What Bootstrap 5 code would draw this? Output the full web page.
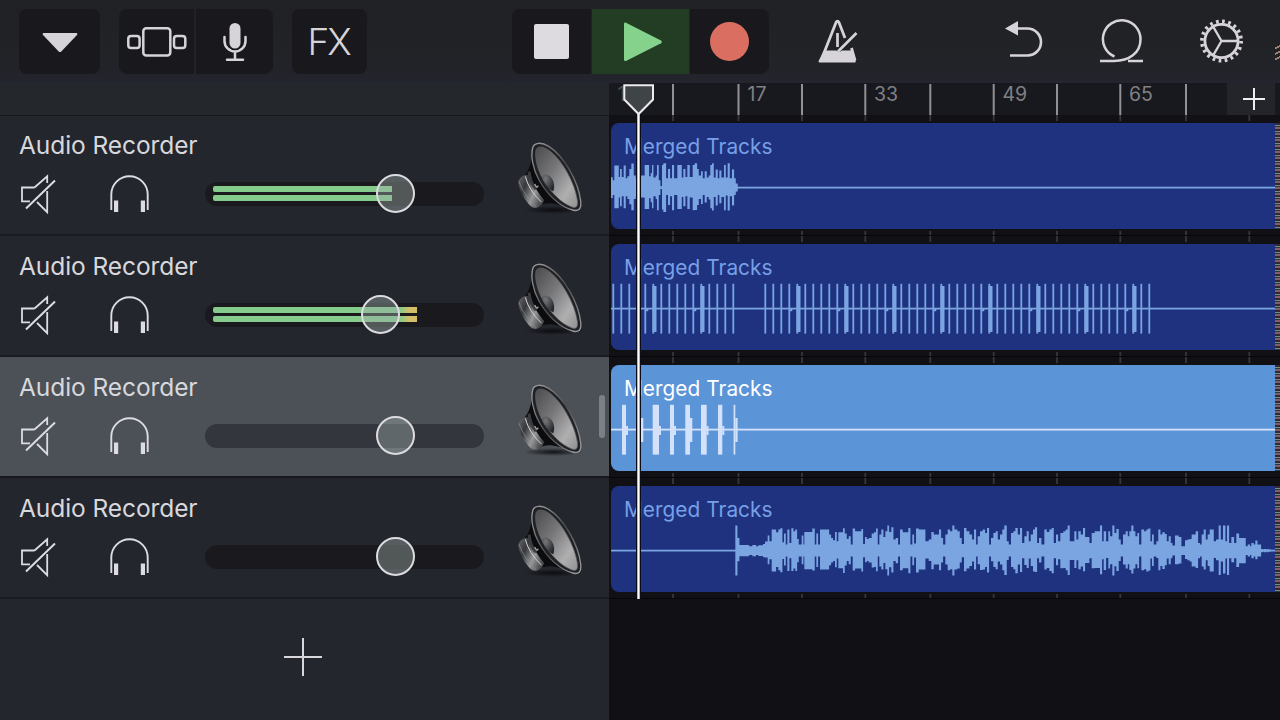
<!DOCTYPE html>
<html lang="en">
<head>
<meta charset="utf-8">
<meta name="viewport" content="width=device-width, initial-scale=1">
<title>Tracks</title>
<link href="https://cdn.jsdelivr.net/npm/bootstrap@5.3.0/dist/css/bootstrap.min.css" rel="stylesheet">
<style>
body{background:#111115;color:#d8d8dc;font-family:Inter,"Liberation Sans",sans-serif;height:720px;overflow:hidden}
svg{display:block;flex-shrink:0}
.toolbar{height:83px;padding:9px 0 9px 19px;background:linear-gradient(#202125,#222327 65%,#23242d)}
.tool{height:65px;background:#19191d;border:0;border-radius:8px;padding:0;display:flex;align-items:center;justify-content:center;color:#d6d4d9}
.tool-split{gap:2px}
.tool-split .tool:first-child{border-radius:8px 0 0 8px}
.tool-split .tool:last-child{border-radius:0 8px 8px 0}
.fx{font-size:37px;font-weight:300;letter-spacing:-2px;padding-right:2px}
.tool.playing{background:#233d24;border-radius:0}
.bare{height:65px;display:flex;align-items:center}
.mixer{width:609px;background:#24262e}
.mixer-head{height:32px;background:#24282c;box-shadow:0 1px #17181c}
.track{height:121px;border-bottom:2px solid #1b1c22;padding:12px 0 0 20px}
.track.selected{background:#4b5156;border-color:#17181c}
.track-name{font-size:24.5px;line-height:36px;letter-spacing:-.08px;margin-left:-1px;height:36px;white-space:nowrap}
.controls{height:61px}
.slider{width:279px;height:24px;border-radius:12px;background:#1a1a1e}
.selected .slider{background:#33363d}
.level{left:8px;height:6px;border-radius:2px 0 0 2px;background:linear-gradient(90deg,#84cb8c 187px,#d3bd68 196px)}
.level.l1{top:4px}.level.l2{top:13.5px}
.knob{width:39px;height:39px;top:-7.5px;border:2px solid #dcdbe0;border-radius:50%;background:rgba(160,172,170,.42)}
.grip{width:6px;height:43px;right:4px;top:38px;border-radius:3px;background:#7b8084}
.ruler{height:32px;background:#18191e}
.ruler svg{overflow:visible}
.ruler text{font-size:19.5px;fill:#808084}
.add-section{right:5px;top:0;width:48px;height:32px;background:#24252b}
.lane{height:121px;border-bottom:1px solid #060608;padding:8px 0 0 2px}
.lane-grid{inset:0}
.clip{width:664px;height:106px;border-radius:8px 0 0 8px;background:#1e3280;color:#78a0e6;box-shadow:0 0 0 2px #111115}
.clip.selected{background:#5c94d8;color:#fff}
.clip-name{font-size:20.8px;line-height:26px;left:13px;top:11px;letter-spacing:.05px;white-space:nowrap}
.wave{left:0;top:0;fill:#7aa5e0}
.selected .wave{fill:#d3e1fb}
.edge{width:5px;height:106px;background:repeating-linear-gradient(#342835 0 2px,#7b8b7b 2px 3px,#253a42 3px 4px,#806068 4px 6px)}
.edge-tip{right:0;top:44px;width:5px;height:16px;background:repeating-linear-gradient(155deg,#222 0 3px,#9a8178 3px 5px)}
.playhead{left:14px;top:0;pointer-events:none}
</style>
</head>
<body>
<svg width="0" height="0" class="position-absolute" aria-hidden="true">
<defs>
<linearGradient id="cone" x1="0" y1="0" x2="1" y2="1"><stop offset="0" stop-color="#4b4b4d"/><stop offset=".4" stop-color="#77777a"/><stop offset=".75" stop-color="#b0afb0"/><stop offset="1" stop-color="#909092"/></linearGradient>
<linearGradient id="rim" x1="0" y1="0" x2="1" y2="1"><stop offset="0" stop-color="#a0a0a3"/><stop offset=".5" stop-color="#4b4c50"/><stop offset="1" stop-color="#a0a0a3"/></linearGradient>
<linearGradient id="magnet" x1="0" y1="0" x2="1" y2=".6"><stop offset="0" stop-color="#68696c"/><stop offset=".35" stop-color="#37383b"/><stop offset=".7" stop-color="#98999b"/><stop offset="1" stop-color="#4d4e50"/></linearGradient>
<radialGradient id="dust" cx=".3" cy=".25" r=".8"><stop offset="0" stop-color="#76777a"/><stop offset="1" stop-color="#252629"/></radialGradient>
<radialGradient id="floor"><stop offset="0" stop-color="#08080a" stop-opacity=".85"/><stop offset="1" stop-color="#08080a" stop-opacity="0"/></radialGradient>
<symbol id="i-speaker" viewBox="465 60 210 225">
<ellipse cx="580" cy="270" rx="90" ry="12" fill="url(#floor)"/>
<path d="M519 92C512 132 510 150 488 172L530 262C555 245 580 243 640 270L600 190Z" fill="#0c0c0e"/>
<path d="M475 188Q476 174 492 166Q505 160 510 172Q526 210 552 240Q548 258 527 264Q516 264 506 252Q480 222 475 188Z" fill="url(#magnet)"/>
<path d="M477 184Q490 224 530 262" fill="none" stroke="#8c8d90" stroke-width="2"/>
<path d="M496 169Q506 210 544 246" fill="none" stroke="#d5d5d8" stroke-width="3"/>
<path d="M507 155Q510 188 528 208" fill="none" stroke="#3b3c40" stroke-width="9"/>
<path d="M524 192Q532 208 534 197" fill="none" stroke="#aaa" stroke-width="4"/>
<path d="M518 84C522 66 545 66 566 79C612 107 655 185 662 243C665 268 655 275 638 270C600 260 562 225 537 180C518 145 512 108 518 84Z" fill="#202124" stroke="url(#rim)" stroke-width="4"/>
<path d="M528 90C532 78 548 78 566 90C606 118 645 190 652 240C655 260 648 266 634 260C602 248 572 216 549 178C530 145 524 110 528 90Z" fill="url(#cone)" stroke="#626367" stroke-width="2"/>
<path d="M546 174C550 160 562 162 572 171C582 181 585 200 580 214C567 208 553 192 546 174Z" fill="url(#dust)"/>
</symbol>
<symbol id="i-mute" viewBox="0 0 36 40"><g fill="none" stroke="#dcdce2" stroke-width="1.8"><path d="M14.500 13.500 27.200 2.300V9M10 27.300H2V13.500H14.500M17 28 27.200 38.200V17"/><path d="M6 34.500 35 6.500" stroke-width="2"/></g></symbol>
<symbol id="i-phones" viewBox="0 0 41 40"><path d="M2.300 36V20.500A18.200 18.200 0 0 1 38.700 20.500V36" fill="none" stroke="#dcdce2" stroke-width="1.900"/><path d="M5 26.500h4.200v11.500H5zM31.800 26.500H36v11.500h-4.200z" fill="#dcdce2"/></symbol>
</defs>
</svg>

<header class="toolbar d-flex position-relative">
  <button class="tool" style="width:81px" aria-label="Navigation"><svg width="36" height="20" viewBox="0 0 36 20" style="margin-top:3px"><path d="M1.500 0H34.500Q36 .5 35.200 1.800L19.300 18.500Q18 19.600 16.700 18.500L.8 1.800Q0 .5 1.500 0Z" fill="#d6d4d9"/></svg></button>
  <div class="tool-split d-flex" style="margin-left:19px">
    <button class="tool" style="width:75px" aria-label="Browser"><svg width="60" height="30" viewBox="0 0 60 30" fill="none" stroke="#d6d4d9" stroke-width="2.500"><rect x="16.300" y="1.300" width="27" height="27.200" rx="3"/><rect x="1.300" y="9" width="11.300" height="12" rx="2.800"/><rect x="47" y="9" width="11.300" height="12" rx="2.800"/></svg></button>
    <button class="tool" style="width:77px" aria-label="Microphone"><svg width="24" height="40" viewBox="0 0 24 40"><rect x="6.500" y="1" width="11" height="25.500" rx="5.500" fill="#d6d4d9"/><path d="M1.500 15V19a10.500 10.500 0 0 0 21 0V15M12 29.500V37.500M4 37.800H20" fill="none" stroke="#d6d4d9" stroke-width="2.500" stroke-linecap="round"/></svg></button>
  </div>
  <button class="tool fx" style="width:75px;margin-left:19px">FX</button>
  <div class="d-flex" style="margin-left:145px;gap:1px">
    <button class="tool rounded-end-0" style="width:79px" aria-label="Stop"><svg width="35" height="35" style="margin-right:1px"><rect width="35" height="35" rx="2" fill="#dedbe0"/></svg></button>
    <button class="tool playing" style="width:97px" aria-label="Play"><svg width="38" height="40" style="margin-left:4px"><path d="M0 2Q0 0 2 .8L37 18.500Q38.500 20 37 21.200L2 39Q0 39.500 0 37.500Z" fill="#84d28c"/></svg></button>
    <button class="tool rounded-start-0" style="width:79px" aria-label="Record"><svg width="39" height="39"><circle cx="19.500" cy="19.500" r="19.500" fill="#da6e60"/></svg></button>
  </div>
  <div class="bare" style="margin-left:49px"><svg width="41" height="44" viewBox="0 0 41 44" style="margin-top:-2px"><path d="M3 41.500 18 3.500Q19.500 .7 21 3.500L27 19M33.500 29 37 41.500" fill="none" stroke="#d6d4d9" stroke-width="2.800"/><path d="M6 31.500H18L21.500 33 24 31.500H34L37.800 42Q38 43.500 36.500 43.500H2Q0 43.500 .8 41.500Z" fill="#d6d4d9"/><path d="M19.500 14V28M20 32.500 38.500 14" stroke="#d6d4d9" stroke-width="2.700" fill="none"/></svg></div>
  <div class="bare" style="margin-left:146px"><svg width="39" height="40" viewBox="0 0 39 40" style="margin-top:-4px"><path d="M0 8.500 13 1V15.500Z" fill="#d6d4d9"/><path d="M11 8.500H22.500a13.200 13.200 0 0 1 0 27H5" fill="none" stroke="#d6d4d9" stroke-width="2.600"/></svg></div>
  <div class="bare" style="margin-left:56px"><svg width="43" height="44" viewBox="0 0 43 44" style="margin-top:-2px"><path d="M0 42H14C29 42 40.500 34 40.500 20.500A18.800 18.800 0 1 0 14.500 37.500M28 42H43" fill="none" stroke="#d6d4d9" stroke-width="2.500"/></svg></div>
  <div class="bare" style="margin-left:57px"><svg width="43" height="44" viewBox="-21.500 -22 43 44" style="margin-top:-2px" fill="none" stroke="#d6d4d9"><circle r="16.600" stroke-width="2.800"/><path d="M0 0H17M0 0-8.500-14.700M0 0-8.500 14.700" stroke-width="2.300"/><circle r="19.600" stroke-width="3.700" stroke-dasharray="2.700 3.458"/></svg></div>
  <div class="edge-tip position-absolute"></div>
</header>

<main class="d-flex" style="height:637px">
  <section class="mixer flex-shrink-0 d-flex flex-column">
    <div class="mixer-head flex-shrink-0"></div>
    <div id="tracks"></div>
    <button class="btn p-0 border-0 rounded-0 d-flex justify-content-center flex-grow-1" style="padding-top:38px!important" aria-label="Add track"><svg width="40" height="40" style="margin-right:3px"><path d="M1 20H39M20 1V39" stroke="#d8d8dc" stroke-width="2"/></svg></button>
  </section>
  <section class="flex-grow-1 position-relative">
    <div class="ruler position-relative"><svg id="ruler" width="671" height="32" viewBox="609 83 671 32"></svg>
      <div class="add-section position-absolute"><svg width="48" height="32"><path d="M16 16H38M27 5V27" stroke="#eee" stroke-width="2"/></svg></div>
    </div>
    <div id="lanes"></div>
    <svg class="playhead position-absolute" width="32" height="516" viewBox="0 0 32 516"><path d="M15.500 31V516" stroke="#0b0d18" stroke-width="5"/><path d="M15.500 31V516" stroke="#fff" stroke-width="2.400"/><path d="M1.300 2.300H30V16.500L15.600 31 1.300 16.500Z" fill="#3f4546" stroke="#ececf0" stroke-width="2"/></svg>
  </section>
</main>

<script>
// Mixer rows: knob centre and meter length, in pixels along the slider
const tracks = [
  {knob:190.5, level:179},
  {knob:175, level:204},
  {knob:190.5, level:0, selected:true},
  {knob:190.5, level:0}
];
document.getElementById('tracks').innerHTML = tracks.map(t => `
  <div class="track d-flex position-relative ${t.selected ? 'selected' : ''}">
    <div><div class="track-name">Audio Recorder</div>
      <div class="controls d-flex align-items-center">
        <svg width="36" height="40"><use href="#i-mute"/></svg>
        <svg width="41" height="40" style="margin-left:53px"><use href="#i-phones"/></svg>
        <div class="slider position-relative" style="margin-left:55px">
          ${t.level ? `<div class="level l1 position-absolute" style="width:${t.level}px"></div><div class="level l2 position-absolute" style="width:${t.level}px"></div>` : ''}
          <div class="knob position-absolute" style="left:${t.knob - 19.5}px"></div>
        </div>
      </div></div>
    <svg width="70" height="75" style="margin-left:31px;margin-top:13px"><use href="#i-speaker"/></svg>
    ${t.selected ? '<div class="grip position-absolute"></div>' : ''}
  </div>`).join('');

const MID = 64.6;
// Stepped outline from "x:half-height" samples in thirds of a pixel
function envelope(x0, samples, end){
  const p = samples.trim().split(/\s+/).map(s => s.split(':').map(Number));
  let d = '';
  p.forEach(([x,h],i) => {
    const next = i + 1 < p.length ? p[i+1][0] : end;
    const low = h > 25 ? h - (i * 7 % 4) * 2 : h;
    d += `M${(x0+x/3).toFixed(2)} ${(MID-h/3).toFixed(2)}H${(x0+next/3+.1).toFixed(2)}V${(MID+low/3).toFixed(2)}H${(x0+x/3).toFixed(2)}Z`;
  });
  return `<path d="${d}"/>`;
}
const bar = (x,w,y=39.8,h=49.8) => `<rect x="${x}" y="${y}" width="${w}" height="${h}"/>`;
function pulses(x0,n,first){
  let s = '';
  for(let i=0;i<n;i++){
    const x = x0 + i*8;
    s += bar(x-.9,1.8);
    if(i >= first && (i-first)%6 === 0) s += bar(x-.8,4,42,46);
    if((i-first+1)%6 === 0) s += bar(x,3,64,3.2);
  }
  return s;
}
const drums = '33:31 38:22 43:66 56:32 60:56 65:32 71:66 77:28 82:34 88:56 94:72 101:36 107:28 123:36 134:68 147:34 152:44 156:68 160:30 167:36 171:68 176:22 181:4 186:68 190:73 198:28 204:56 210:28 216:68 222:28 232:68 245:30 250:56 256:32 262:68 269:32 278:68 284:73 291:56 296:36 303:49 308:28 314:49 320:30 326:36 331:68 336:73 341:30 347:54 353:28 358:51 364:30 372:68 377:30 383:73 389:28 396:54 402:28 407:12';
const song = '46:75 52:38 58:17 87:13 97:17 108:13 115:16 125:16 129:20 135:27 143:45 148:28 155:63 168:55 175:63 181:67 187:25 192:51 197:18 202:63 208:23 214:67 220:58 226:63 231:35 236:18 245:45 250:18 253:56 277:66 284:18 289:51 294:18 300:63 327:48 333:38 339:31 345:56 350:28 355:55 369:67 374:51 380:35 386:43 392:18 398:66 405:58 424:65 429:20 435:41 440:35 446:38 455:51 462:55 468:66 473:18 478:48 484:63 490:41 496:58 502:75 507:56 514:70 520:33 527:38 534:18 540:63 548:55 565:68 571:18 577:48 582:21 588:66 596:63 616:28 626:33 634:56 641:48 657:63 663:38 669:18 676:48 683:63 690:58 697:75 703:63 712:58 719:38 725:20 732:68 739:58 748:48 756:33 762:63 768:18 773:43 780:58 788:63 795:53 801:68 807:18 813:38 820:53 827:58 833:33 '
  + '840:48 847:63 853:75 860:28 866:18 873:53 880:58 886:68 893:48 900:68 906:23 913:43 920:58 926:28 932:48 939:63 945:70 951:23 957:38 964:18 973:63 980:56 988:63 995:68 1001:23 1008:48 1014:28 1021:53 1030:58 1037:63 1043:75 1049:28 1063:58 1069:33 1075:58 1082:48 1089:68 1095:41 1108:23 1115:53 1124:58 1140:75 1146:28 1151:58 1158:28 1165:58 1170:43 1177:75 1183:53 1189:65 1196:33 1202:18 1209:48 1217:58 1223:43 1228:58 1234:75 1240:58 1246:43 1252:53 1257:18 1264:63 1272:58 1279:63 1285:66 1291:28 1296:48 1301:18 1309:28 1315:63 1321:48 1327:55 1334:50 1340:28 1346:43 1352:23 1357:15 1365:45 1376:41 1384:13 1395:31 1402:33 1409:35 1415:48 1427:58 1434:23 1440:18 1445:48 1451:63 1457:33 1463:48 1469:63 1481:28 1488:33 1496:75 1502:33 1509:75 1516:28 1521:75 1527:23 1534:41 1542:23 1549:51 1557:38 1577:13 1583:18 1590:13 1594:23 1601:18 1606:30 1612:18 1623:5 1629:3 1632:5 1638:3 1641:5 1645:3';
const hits = [[622,4],[652.7,6.3],[670,4],[685.3,4.7],[701,5.7],[718,4.3],[733.6,1.7]].map(b => bar(...b)).join('')
  + [626,659,674,706.5,722.3].map(x => bar(x,2,61,9)).join('')
  + [641,690,735.3].map(x => bar(x,2.3,53,24)).join('');
const waves = [envelope(600, drums, 413), pulses(613.3,16,5) + pulses(765.3,49,4), hits, envelope(720, song, 1652)];

const ticks = [673,738.5,802,865.3,930.3,993.7,1057,1120.3,1186,1249.3];
const grid = `<svg class="lane-grid position-absolute" width="671" height="120" viewBox="609 0 671 120">${ticks.map(x => `<path d="M${x} 0V120" stroke="#37373b" stroke-width="1.8"/>`).join('')}</svg>`;
document.getElementById('lanes').innerHTML = waves.map((w,i) => `
  <div class="lane d-flex position-relative">${grid}
    <div class="clip position-relative ${i === 2 ? 'selected' : ''}">
      <svg class="wave position-absolute" width="664" height="106" viewBox="611 0 664 106"><rect x="611" y="${MID-.9}" width="664" height="1.8"/>${w}</svg>
      <div class="clip-name position-absolute">Merged Tracks</div>
    </div><div class="edge position-relative"></div>
  </div>`).join('');
document.getElementById('ruler').innerHTML = '<text x="617.500" y="100.500" style="fill:#4c4c50">1</text>'
  + ticks.slice(0,9).map(x => `<path d="M${x} 84V115" stroke="#919195" stroke-width="2"/>`).join('')
  + [[747.5,17],[874,33],[1002.500,49],[1129,65]].map(([x,n]) => `<text x="${x}" y="100.500">${n}</text>`).join('');
</script>
<script src="https://cdn.jsdelivr.net/npm/bootstrap@5.3.0/dist/js/bootstrap.bundle.min.js"></script>
</body>
</html>
